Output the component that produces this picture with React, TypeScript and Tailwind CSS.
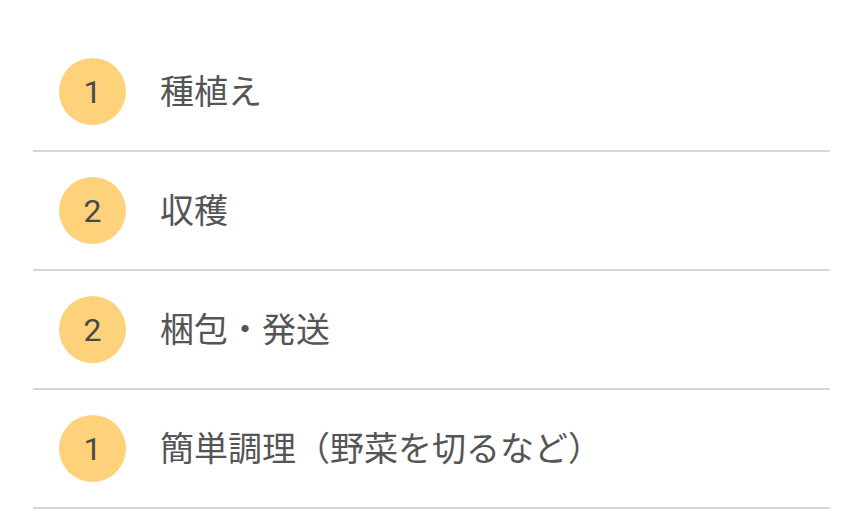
import React from "react";

const items = [
  { n: 1, label: "種植え" },
  { n: 2, label: "収穫" },
  { n: 2, label: "梱包・発送" },
  { n: 1, label: "簡単調理（野菜を切るなど）" },
];

export default function App() {
  return (
    <div className="w-[864px] h-[527px] bg-white pt-[33px] pl-[33px] pr-[34px] overflow-hidden" style={{ fontFamily: '"Noto Sans CJK JP", Roboto, sans-serif' }}>
      {items.map((it, i) => (
        <div key={i} className="h-[119px] flex items-center border-b-2 border-[#d6d6d6] pl-[26px]">
          <div className="w-[67px] h-[67px] rounded-full bg-[#fed27a] flex items-center justify-center shrink-0">
            <span className="text-[32px] leading-none text-[#4a4a4a]" style={{ fontFamily: 'Roboto, sans-serif' }}>{it.n}</span>
          </div>
          <span className="ml-[34px] mb-[4px] text-[34px] leading-none text-[#555555] whitespace-nowrap">{it.label}</span>
        </div>
      ))}
    </div>
  );
}
